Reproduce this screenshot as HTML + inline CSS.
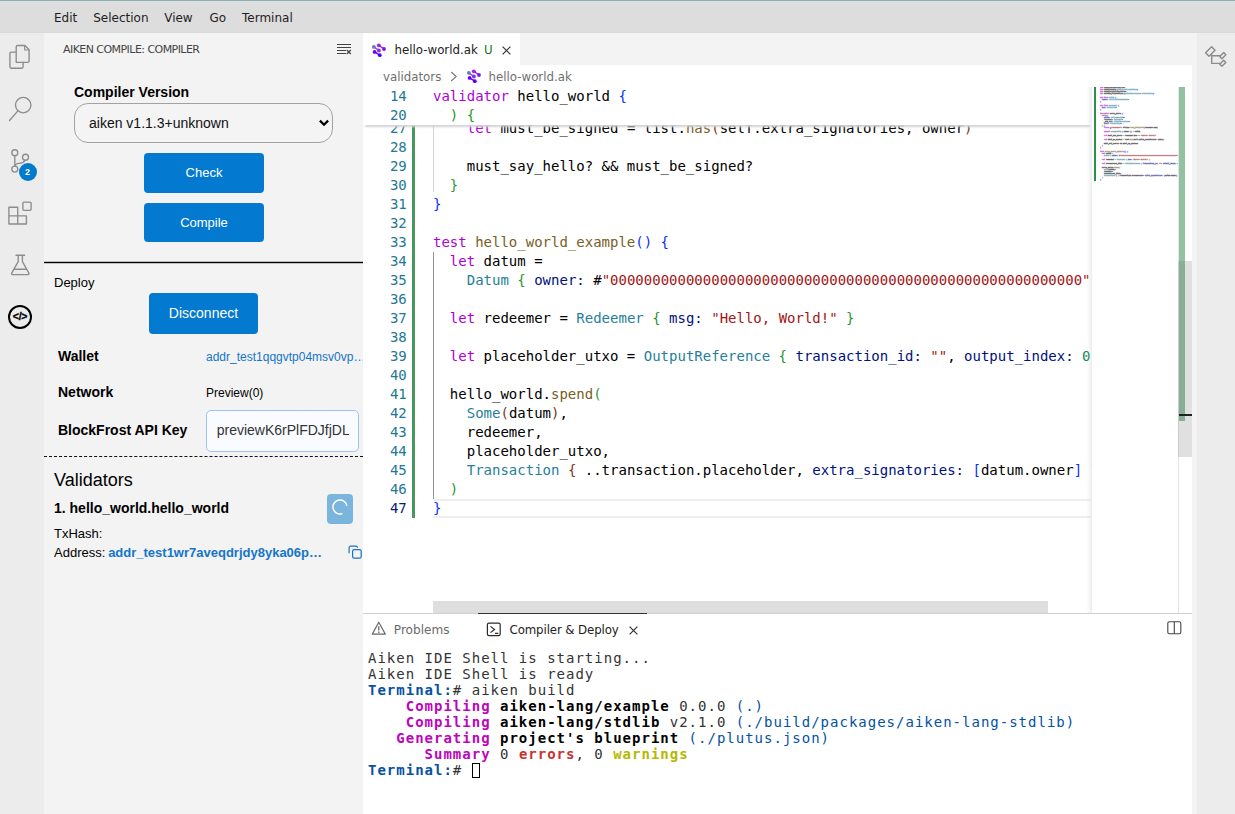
<!DOCTYPE html>
<html lang="en">
<head>
<meta charset="utf-8">
<title>Aiken IDE</title>
<style>
*{box-sizing:border-box;margin:0;padding:0}
html,body{width:1235px;height:814px;overflow:hidden;background:#fff}
body{position:relative;font-family:"Liberation Sans","DejaVu Sans",sans-serif;color:#000;font-size:13px}
.abs{position:absolute}
.ui{font-family:"DejaVu Sans","Liberation Sans",sans-serif}
.mono{font-family:"DejaVu Sans Mono","Liberation Mono",monospace}
#topline{left:0;top:0;width:1235px;height:1px;background:#8aafb4}
#menubar{left:0;top:1px;width:1235px;height:32px;background:#dddddd;z-index:5;border-bottom:1px solid #d9d9d9}
#menubar span{position:absolute;top:2px;line-height:31px;font-size:12px;color:#1e1e1e;white-space:nowrap}
#actbar{left:0;top:32px;width:44px;height:782px;background:#ececec}
#ractbar{left:1192px;top:32px;width:43px;height:782px;background:#ececec}
#side{left:44px;top:32px;width:319px;height:782px;background:#f3f3f3}
#main{left:363px;top:32px;width:829px;height:782px;background:#fff}
#tabbar{left:0;top:1px;width:829px;height:32px;background:#f3f3f3}
#tab1{left:0;top:0;width:157px;height:32px;background:#fff}

#side .t{position:absolute;white-space:nowrap;line-height:1}
#ptitle{left:19px;top:12px;font-size:11px;letter-spacing:-0.55px;color:#444;line-height:14px}
#sel{left:30px;top:71px;width:259px;height:40px;border:1px solid #a2a2a2;border-radius:14px;background:#f4f4f4}
#sel span{position:absolute;left:14px;top:0;line-height:38px;font-size:14px;color:#111}
.btn{position:absolute;background:#0379d0;color:#fff;border-radius:4px;text-align:center}
#hr1{left:0;top:229px;width:319px;height:3px;background:linear-gradient(rgba(0,0,0,.22) 0 1px,#000 1px 2px,rgba(0,0,0,.22) 2px 3px)}
#hr2{left:0;top:424px;width:319px;height:0;border-top:1px dashed #111}
#inp{left:162px;top:378px;width:153px;height:42px;border:1px solid #9cc3f5;border-radius:5px;background:#f9fbff;overflow:hidden}
#inp span{position:absolute;left:0;top:0;line-height:39.500px;font-size:14px;color:#333;white-space:nowrap}
.lnk{color:#1575c8}

#crumbs{left:0;top:33px;width:829px;height:22px;background:#fff}
#ed{left:0;top:55px;width:829px;height:526px;background:#fff;overflow:hidden}
.cl{position:absolute;left:70px;height:19px;line-height:19px;font-size:14px;white-space:pre;color:#000}
.ln{position:absolute;left:0;width:43.8px;text-align:right;height:19px;line-height:19px;font-size:14px;color:#237893}
#code{left:0;top:0;width:729px;height:526px;overflow:hidden}
#sticky{left:0;top:0;width:729px;height:38px;background:#fff;box-shadow:#d4d4d4 0 4px 2px -2px}
#mini{left:729px;top:0;width:86px;height:526px;background:#fff;overflow:hidden}
#minish{left:723px;top:0;width:6px;height:526px;box-shadow:#d8d8d8 -6px 0 6px -6px inset}
#minitext{-webkit-text-stroke:4.5px;opacity:.6;position:absolute;left:8px;top:0;transform-origin:0 0;transform:scale(0.1186,0.10526);font-size:14px;line-height:19px;white-space:pre;color:#000;width:740px;overflow:hidden}
#minitext div{height:19px}
#ovr{left:815px;top:0;width:14px;height:526px;background:#fff;border-left:1px solid #e6e6e6}
#panel{left:0;top:581px;width:829px;height:201px;background:#fff;border-top:1px solid #d0d0d0}
#term{left:5px;top:36px;font-size:14px;line-height:16px;letter-spacing:1px;white-space:pre;color:#333}
#term b{font-weight:700}

.uit{position:absolute;white-space:nowrap;font-size:11.8px;line-height:16px}
</style>
</head>
<body>
<div id="topline" class="abs"></div>
<div id="menubar" class="abs ui">
<span style="left:54px">Edit</span><span style="left:93.2px">Selection</span><span style="left:164.2px">View</span><span style="left:209.5px">Go</span><span style="left:242px">Terminal</span>
</div>
<div id="actbar" class="abs">
<svg class="abs" style="left:0;top:0" width="44" height="310" viewBox="0 32 44 310" fill="none" stroke="#8c8c8c" stroke-width="1.350" stroke-linejoin="round" stroke-linecap="round">
<!-- files -->
<path d="M16.200 62.300V46.900a1.400 1.400 0 0 1 1.400-1.400h7.300l4.200 4.200V60.900a1.400 1.400 0 0 1-1.400 1.400z"/><path d="M24.700 45.700v4.300h4.200" stroke-width="1.200"/>
<path d="M16.200 52.100h-4.900a1.400 1.400 0 0 0-1.400 1.400V66.800a1.400 1.400 0 0 0 1.400 1.400h10.400a1.400 1.400 0 0 0 1.400-1.400V62.300"/>
<!-- search -->
<circle cx="23.200" cy="105.100" r="7.700"/><path d="M17.900 110.900L9.500 120.500"/>
<!-- scm -->
<circle cx="14.800" cy="152.700" r="3"/><circle cx="25.500" cy="157.200" r="3"/><circle cx="14.800" cy="169.100" r="3"/>
<path d="M14.800 155.700v10.400M24.800 160.200C24 162.800 21.500 163.200 19 163.300C16.800 163.400 15.200 164.200 14.800 166"/>
<!-- extensions -->
<path d="M8.900 207.200h8.800v8.600h8.700v8.200H8.900zM8.900 215.800h8.800M17.700 215.800v8.200"/>
<rect x="22.900" y="202.100" width="8.200" height="8.200" rx="1"/>
<!-- beaker -->
<path d="M16 255.200h8.600M18.200 255.400v6.300L11.700 273.100a1 1 0 0 0 .9 1.500h15.400a1 1 0 0 0 .9-1.500L22.400 261.700v-6.300M14.400 269.200h11.800"/>
</svg>
<div class="abs" style="left:18.5px;top:130.800px;width:18px;height:18px;border-radius:50%;background:#007acc;color:#fff;font-size:9px;font-weight:700;line-height:18.500px;text-align:center">2</div>
<div class="abs" style="left:8px;top:273px;width:24px;height:24px;border-radius:50%;border:2px solid #000;color:#000;font-size:10.500px;font-weight:700;line-height:19.500px;text-align:center;letter-spacing:-0.2px;-webkit-text-stroke:0.3px #000">&lt;/&gt;</div>
</div>
<div id="side" class="abs">
<div id="ptitle" class="t ui">AIKEN COMPILE: COMPILER</div>
<svg class="abs" style="left:292px;top:10px" width="16" height="16" viewBox="0 0 16 16" fill="none" stroke="#424242" stroke-width="1"><path d="M1 2.5h14M1 5.5h14M1 8.500h9M1 11.500h9"/><path d="M10.800 8l4 4M14.800 8l-4 4" stroke-width="1.200"/></svg>
<div class="t" style="left:30px;top:52px;font-size:14px;font-weight:700;line-height:16px">Compiler Version</div>
<div id="sel" class="abs"><span>aiken v1.1.3+unknown</span>
<svg class="abs" style="left:243px;top:14px" width="12" height="10" viewBox="0 0 12 10" fill="none" stroke="#000" stroke-width="2.300"><path d="M1.900 2.600L6 6.700l4.100-4.100"/></svg></div>
<div class="btn" style="left:100px;top:121px;width:120px;height:40px;line-height:40px;font-size:13px">Check</div>
<div class="btn" style="left:100px;top:171px;width:120px;height:39px;line-height:39px;font-size:13px">Compile</div>
<div id="hr1" class="abs"></div>
<div class="t" style="left:10px;top:243px;font-size:13px;line-height:15px">Deploy</div>
<div class="btn" style="left:105px;top:261px;width:109px;height:41px;line-height:40px;font-size:14px">Disconnect</div>
<div class="t" style="left:14px;top:316px;font-size:14px;font-weight:700;line-height:16px">Wallet</div>
<div class="t lnk" style="left:162px;top:318px;font-size:12px;line-height:14px;width:157px;overflow:hidden">addr_test1qqgvtp04msv0vp…</div>
<div class="t" style="left:14px;top:352px;font-size:14px;font-weight:700;line-height:16px">Network</div>
<div class="t" style="left:162px;top:354px;font-size:12px;line-height:14px">Preview(0)</div>
<div class="t" style="left:14px;top:390px;font-size:14px;font-weight:700;line-height:16px">BlockFrost API Key</div>
<div id="inp" class="abs"><div class="abs" style="left:9.700px;top:0;width:132px;height:40px;overflow:hidden"><span>previewK6rPlFDJfjDLq8wTn</span></div></div>
<div id="hr2" class="abs"></div>
<div class="t" style="left:10px;top:438px;font-size:18px;line-height:21px">Validators</div>
<div class="t" style="left:10px;top:468px;font-size:14px;font-weight:700;line-height:16px">1. hello_world.hello_world</div>
<div class="abs" style="left:283px;top:462px;width:26px;height:30px;border-radius:4px;background:#7ab5de"></div>
<svg class="abs" style="left:287.5px;top:467px" width="16" height="16" viewBox="0 0 16 16" fill="none" stroke="#fff" stroke-width="1.5" stroke-linecap="round"><path d="M14.76 6.19A7 7 0 1 0 9.81 14.76"/></svg>
<div class="t" style="left:10px;top:494px;font-size:13px;line-height:15px">TxHash:</div>
<div class="t" style="left:10px;top:513px;font-size:13px;line-height:15px">Address: <b class="lnk" style="margin-left:-0.8px">addr_test1wr7aveqdrjdy8yka06p…</b></div>
<svg class="abs" style="left:304px;top:513px" width="14" height="14" viewBox="0 0 14 14" fill="none" stroke="#1a73c4" stroke-width="1.2"><rect x="4.6" y="4.6" width="8.6" height="8.6" rx="1.6"/><path d="M1.1 8.2V2.7a1.6 1.6 0 0 1 1.6-1.6h5.2a1.6 1.6 0 0 1 1.6 1.6"/></svg>
</div>
<div id="main" class="abs">
<div id="tabbar" class="abs"><div id="tab1" class="abs">
<svg class="abs" style="left:7px;top:9px" width="16" height="16" viewBox="0 0 16 16" fill="none" stroke-linecap="round"><defs><linearGradient id="g1a" x1="0" y1="0" x2="1" y2="1"><stop offset="0" stop-color="#6a72d2"/><stop offset="1" stop-color="#8a2be2"/></linearGradient></defs><path d="M3.9 4.9L8.9 8.5" stroke="#7a4ad8" stroke-width="1.4"/><path d="M8.8 3.3L14 7" stroke="#9418e6" stroke-width="1.4"/><path d="M4.6 9.9L9.8 13.2" stroke="#5c00fa" stroke-width="1.4"/><circle cx="3.9" cy="4.9" r="1.9" fill="#6a72d2"/><circle cx="8.9" cy="8.5" r="1.9" fill="#8632de"/><circle cx="8.8" cy="3.3" r="1.9" fill="#a022e2"/><circle cx="14" cy="7" r="1.9" fill="#8a10f0"/><circle cx="4.6" cy="9.9" r="1.9" fill="#6a00fb"/><circle cx="9.8" cy="13.2" r="1.9" fill="#5200ff"/></svg>
<div class="uit ui" style="left:31.5px;top:9px;color:#222">hello-world.ak</div>
<div class="uit ui" style="left:121px;top:9px;color:#0a7a0a">U</div>
<svg class="abs" style="left:139px;top:13px" width="9" height="9" viewBox="0 0 9 9" fill="none" stroke="#333" stroke-width="1.2"><path d="M0.6 0.6l7.8 7.8M8.4 0.6L0.6 8.4"/></svg>
</div></div>
<div id="crumbs" class="abs">
<div class="uit ui" style="left:20px;top:4px;color:#6f6f6f">validators</div>
<svg class="abs" style="left:87px;top:6px" width="8" height="11" viewBox="0 0 8 11" fill="none" stroke="#7a7a7a" stroke-width="1.1"><path d="M1.2 1l5 4.5-5 4.5"/></svg>
<svg class="abs" style="left:102px;top:3px" width="16" height="16" viewBox="0 0 16 16" fill="none" stroke-linecap="round"><defs><linearGradient id="g2a" x1="0" y1="0" x2="1" y2="1"><stop offset="0" stop-color="#6a72d2"/><stop offset="1" stop-color="#8a2be2"/></linearGradient></defs><path d="M3.9 4.9L8.9 8.5" stroke="#7a4ad8" stroke-width="1.4"/><path d="M8.8 3.3L14 7" stroke="#9418e6" stroke-width="1.4"/><path d="M4.6 9.9L9.8 13.2" stroke="#5c00fa" stroke-width="1.4"/><circle cx="3.9" cy="4.9" r="1.9" fill="#6a72d2"/><circle cx="8.9" cy="8.5" r="1.9" fill="#8632de"/><circle cx="8.8" cy="3.3" r="1.9" fill="#a022e2"/><circle cx="14" cy="7" r="1.9" fill="#8a10f0"/><circle cx="4.6" cy="9.9" r="1.9" fill="#6a00fb"/><circle cx="9.8" cy="13.2" r="1.9" fill="#5200ff"/></svg>
<div class="uit ui" style="left:125.5px;top:4px;color:#6f6f6f">hello-world.ak</div>
</div>
<div id="ed" class="abs">
<div id="code" class="abs">
<div class="abs" style="left:49px;top:38px;width:3px;height:393px;background:#48985d"></div>
<div class="abs" style="left:70px;top:412px;width:658px;height:19px;border-top:2px solid #eee;border-bottom:2px solid #eee"></div>
<div class="abs" style="left:70px;top:38px;width:1px;height:67px;background:#d3d3d3"></div>
<div class="abs" style="left:70px;top:165px;width:1px;height:247px;background:#939393"></div>
<div class="ln mono" style="top:32px;color:#237893">27</div><div class="cl mono" style="top:32px">    <span style="color:#af00db">let</span> must_be_signed = list.<span style="color:#795e26">has</span><span style="color:#7b3814">(</span>self.extra_signatories, owner<span style="color:#7b3814">)</span></div>
<div class="ln mono" style="top:51px;color:#237893">28</div><div class="cl mono" style="top:51px"></div>
<div class="ln mono" style="top:70px;color:#237893">29</div><div class="cl mono" style="top:70px">    must_say_hello? &amp;&amp; must_be_signed?</div>
<div class="ln mono" style="top:89px;color:#237893">30</div><div class="cl mono" style="top:89px">  <span style="color:#319331">}</span></div>
<div class="ln mono" style="top:108px;color:#237893">31</div><div class="cl mono" style="top:108px"><span style="color:#0431fa">}</span></div>
<div class="ln mono" style="top:127px;color:#237893">32</div><div class="cl mono" style="top:127px"></div>
<div class="ln mono" style="top:146px;color:#237893">33</div><div class="cl mono" style="top:146px"><span style="color:#af00db">test</span> <span style="color:#795e26">hello_world_example</span><span style="color:#0431fa">()</span> <span style="color:#0431fa">{</span></div>
<div class="ln mono" style="top:165px;color:#237893">34</div><div class="cl mono" style="top:165px">  <span style="color:#af00db">let</span> datum =</div>
<div class="ln mono" style="top:184px;color:#237893">35</div><div class="cl mono" style="top:184px">    <span style="color:#267f99">Datum</span> <span style="color:#319331">{</span> <span style="color:#001080">owner:</span> #<span style="color:#a31515">"00000000000000000000000000000000000000000000000000000000"</span> <span style="color:#319331">}</span></div>
<div class="ln mono" style="top:203px;color:#237893">36</div><div class="cl mono" style="top:203px"></div>
<div class="ln mono" style="top:222px;color:#237893">37</div><div class="cl mono" style="top:222px">  <span style="color:#af00db">let</span> redeemer = <span style="color:#267f99">Redeemer</span> <span style="color:#319331">{</span> <span style="color:#001080">msg:</span> <span style="color:#a31515">"Hello, World!"</span> <span style="color:#319331">}</span></div>
<div class="ln mono" style="top:241px;color:#237893">38</div><div class="cl mono" style="top:241px"></div>
<div class="ln mono" style="top:260px;color:#237893">39</div><div class="cl mono" style="top:260px">  <span style="color:#af00db">let</span> placeholder_utxo = <span style="color:#267f99">OutputReference</span> <span style="color:#319331">{</span> <span style="color:#001080">transaction_id:</span> <span style="color:#a31515">""</span>, <span style="color:#001080">output_index:</span> <span style="color:#098658">0</span> <span style="color:#319331">}</span></div>
<div class="ln mono" style="top:279px;color:#237893">40</div><div class="cl mono" style="top:279px"></div>
<div class="ln mono" style="top:298px;color:#237893">41</div><div class="cl mono" style="top:298px">  hello_world.<span style="color:#795e26">spend</span><span style="color:#319331">(</span></div>
<div class="ln mono" style="top:317px;color:#237893">42</div><div class="cl mono" style="top:317px">    <span style="color:#267f99">Some</span><span style="color:#7b3814">(</span>datum<span style="color:#7b3814">)</span>,</div>
<div class="ln mono" style="top:336px;color:#237893">43</div><div class="cl mono" style="top:336px">    redeemer,</div>
<div class="ln mono" style="top:355px;color:#237893">44</div><div class="cl mono" style="top:355px">    placeholder_utxo,</div>
<div class="ln mono" style="top:374px;color:#237893">45</div><div class="cl mono" style="top:374px">    <span style="color:#267f99">Transaction</span> <span style="color:#7b3814">{</span> ..transaction.placeholder, <span style="color:#001080">extra_signatories:</span> <span style="color:#0431fa">[</span>datum.owner<span style="color:#0431fa">]</span> <span style="color:#7b3814">}</span>,</div>
<div class="ln mono" style="top:393px;color:#237893">46</div><div class="cl mono" style="top:393px">  <span style="color:#319331">)</span></div>
<div class="ln mono" style="top:412px;color:#0b216f">47</div><div class="cl mono" style="top:412px"><span style="color:#0431fa">}</span></div>

<div id="sticky" class="abs">
<div class="ln mono" style="top:0px">14</div><div class="cl mono" style="top:0px"><span style="color:#af00db">validator</span> hello_world <span style="color:#0431fa">{</span></div>
<div class="ln mono" style="top:19px">20</div><div class="cl mono" style="top:19px">  <span style="color:#319331">) {</span></div>
</div>
<div class="abs" style="left:70px;top:514px;width:615px;height:12px;background:#dedede"></div>
</div>
<div id="minish" class="abs"></div>
<div id="mini" class="abs">
<div class="abs" style="left:2px;top:0;width:2px;height:94px;background:#2e8f48"></div>
<div id="minitext" class="mono"><div><span style="color:#af00db">use</span> aiken/collection/list</div><div><span style="color:#af00db">use</span> aiken/crypto.<span style="color:#0431fa">{</span><span style="color:#267f99">VerificationKeyHash</span><span style="color:#0431fa">}</span></div><div><span style="color:#af00db">use</span> aiken/primitive/string</div><div><span style="color:#af00db">use</span> cardano/transaction.<span style="color:#0431fa">{</span><span style="color:#267f99">OutputReference</span>, <span style="color:#267f99">Transaction</span><span style="color:#0431fa">}</span></div><div> </div><div><span style="color:#af00db">pub type</span> <span style="color:#267f99">Datum</span> <span style="color:#0431fa">{</span></div><div>  <span style="color:#001080">owner:</span> <span style="color:#267f99">VerificationKeyHash</span>,</div><div><span style="color:#0431fa">}</span></div><div> </div><div><span style="color:#af00db">pub type</span> <span style="color:#267f99">Redeemer</span> <span style="color:#0431fa">{</span></div><div>  <span style="color:#001080">msg:</span> <span style="color:#267f99">ByteArray</span>,</div><div><span style="color:#0431fa">}</span></div><div> </div><div><span style="color:#af00db">validator</span> hello_world <span style="color:#0431fa">{</span></div><div>  <span style="color:#795e26">spend</span><span style="color:#319331">(</span></div><div>    <span style="color:#001080">datum:</span> <span style="color:#267f99">Option</span>&lt;<span style="color:#267f99">Datum</span>&gt;,</div><div>    <span style="color:#001080">redeemer:</span> <span style="color:#267f99">Redeemer</span>,</div><div>    _own_ref: <span style="color:#267f99">OutputReference</span>,</div><div>    <span style="color:#001080">self:</span> <span style="color:#267f99">Transaction</span>,</div><div>  <span style="color:#319331">) {</span></div><div>    <span style="color:#af00db">trace</span> @<span style="color:#a31515">"redeemer"</span>: string.<span style="color:#795e26">from_bytearray</span><span style="color:#7b3814">(</span>redeemer.msg<span style="color:#7b3814">)</span></div><div> </div><div>    <span style="color:#af00db">expect</span> <span style="color:#267f99">Some</span><span style="color:#7b3814">(</span><span style="color:#267f99">Datum</span> <span style="color:#0431fa">{</span> owner <span style="color:#0431fa">}</span><span style="color:#7b3814">)</span> = datum</div><div> </div><div>    <span style="color:#af00db">let</span> must_say_hello = redeemer.msg == <span style="color:#a31515">"Hello, World!"</span></div><div> </div><div>    <span style="color:#af00db">let</span> must_be_signed = list.<span style="color:#795e26">has</span><span style="color:#7b3814">(</span>self.extra_signatories, owner<span style="color:#7b3814">)</span></div><div> </div><div>    must_say_hello? &amp;&amp; must_be_signed?</div><div>  <span style="color:#319331">}</span></div><div><span style="color:#0431fa">}</span></div><div> </div><div><span style="color:#af00db">test</span> <span style="color:#795e26">hello_world_example</span><span style="color:#0431fa">()</span> <span style="color:#0431fa">{</span></div><div>  <span style="color:#af00db">let</span> datum =</div><div>    <span style="color:#267f99">Datum</span> <span style="color:#319331">{</span> <span style="color:#001080">owner:</span> #<span style="color:#a31515">"00000000000000000000000000000000000000000000000000000000"</span> <span style="color:#319331">}</span></div><div> </div><div>  <span style="color:#af00db">let</span> redeemer = <span style="color:#267f99">Redeemer</span> <span style="color:#319331">{</span> <span style="color:#001080">msg:</span> <span style="color:#a31515">"Hello, World!"</span> <span style="color:#319331">}</span></div><div> </div><div>  <span style="color:#af00db">let</span> placeholder_utxo = <span style="color:#267f99">OutputReference</span> <span style="color:#319331">{</span> <span style="color:#001080">transaction_id:</span> <span style="color:#a31515">""</span>, <span style="color:#001080">output_index:</span> <span style="color:#098658">0</span> <span style="color:#319331">}</span></div><div> </div><div>  hello_world.<span style="color:#795e26">spend</span><span style="color:#319331">(</span></div><div>    <span style="color:#267f99">Some</span><span style="color:#7b3814">(</span>datum<span style="color:#7b3814">)</span>,</div><div>    redeemer,</div><div>    placeholder_utxo,</div><div>    <span style="color:#267f99">Transaction</span> <span style="color:#7b3814">{</span> ..transaction.placeholder, <span style="color:#001080">extra_signatories:</span> <span style="color:#0431fa">[</span>datum.owner<span style="color:#0431fa">]</span> <span style="color:#7b3814">}</span>,</div><div>  <span style="color:#319331">)</span></div><div><span style="color:#0431fa">}</span></div></div>
</div>
<div id="ovr" class="abs">
<div class="abs" style="left:0;top:0;width:6px;height:334px;background:#92c2a0"></div>
<div class="abs" style="left:-1px;top:174px;width:14px;height:196px;background:rgba(100,100,100,.2)"></div>
<div class="abs" style="left:0;top:327px;width:13px;height:2px;background:#222"></div>
</div>
</div>
<div id="panel" class="abs">
<div class="abs" style="left:115px;top:-1px;width:169px;height:1px;background:#333"></div>
<svg class="abs" style="left:8px;top:7.4px" width="16" height="15" viewBox="0 0 16 15" fill="none" stroke="#666" stroke-width="1.150"><path d="M7.800 1.300L14.300 13.100H1.300z" stroke-linejoin="round"/><path d="M7.800 5.200v4.300M7.800 10.500v1.400" stroke-width="1.300"/></svg>
<div class="uit ui" style="left:30.8px;top:8px;color:#6a6a6a;font-size:12.1px">Problems</div>
<svg class="abs" style="left:123px;top:7.5px" width="16" height="15" viewBox="0 0 16 15" fill="none" stroke="#2a2a2a" stroke-width="1.200"><rect x="1.400" y="1.100" width="12.800" height="12.600" rx="1.600"/><path d="M4.500 4.400l4 3.100-4 3.100M9 11.400h3.300"/></svg>
<div class="uit ui" style="left:146.5px;top:8px;color:#222;letter-spacing:-0.11px">Compiler &amp; Deploy</div>
<svg class="abs" style="left:265.6px;top:11.5px" width="9" height="9" viewBox="0 0 9 9" fill="none" stroke="#333" stroke-width="1.2"><path d="M0.6 0.6l7.8 7.8M8.4 0.6L0.6 8.4"/></svg>
<svg class="abs" style="left:804px;top:7px" width="15" height="14" viewBox="0 0 15 14" fill="none" stroke="#444" stroke-width="1.1"><rect x="0.8" y="0.8" width="13" height="12" rx="1.5"/><path d="M7.3 0.8v12"/></svg>
<div id="term" class="abs mono">Aiken IDE Shell is starting...
Aiken IDE Shell is ready
<b style="color:#0451a5">Terminal:</b># aiken build
<b style="color:#bc05bc">    Compiling</b> <b style="color:#000">aiken-lang/example</b> 0.0.0 <span style="color:#0451a5">(.)</span>
<b style="color:#bc05bc">    Compiling</b> <b style="color:#000">aiken-lang/stdlib</b> v2.1.0 <span style="color:#0451a5">(./build/packages/aiken-lang-stdlib)</span>
<b style="color:#bc05bc">   Generating</b> <b style="color:#000">project's blueprint</b> <span style="color:#0451a5">(./plutus.json)</span>
<b style="color:#bc05bc">      Summary</b> 0 <b style="color:#cd3131">errors</b>, 0 <b style="color:#b5ba00">warnings</b>
<b style="color:#0451a5">Terminal:</b># <span style="display:inline-block;width:8px;height:15px;border:1px solid #000;vertical-align:-3px"></span></div>
</div>
</div>
<div id="ractbar" class="abs"><div class="abs" style="left:0;top:0;width:5px;height:782px;background:#f3f3f3"></div>
<svg class="abs" style="left:10px;top:10px" width="30" height="30" viewBox="1202 42 30 30" fill="none" stroke="#8b8b8b" stroke-width="1.400" stroke-linejoin="round">
<rect x="-4.300" y="-2.400" width="8.600" height="4.800" transform="translate(1210.300 51.500) rotate(-45)"/>
<rect x="-2.800" y="-1.500" width="5.600" height="3" transform="translate(1222.800 55.600) rotate(-45)"/>
<rect x="-2.800" y="-1.500" width="5.600" height="3" transform="translate(1222.800 63.300) rotate(-45)"/>
<path d="M1211.700 54.500v8.900h8.500M1211.700 55.800h8.500"/>
</svg></div>
</body>
</html>
